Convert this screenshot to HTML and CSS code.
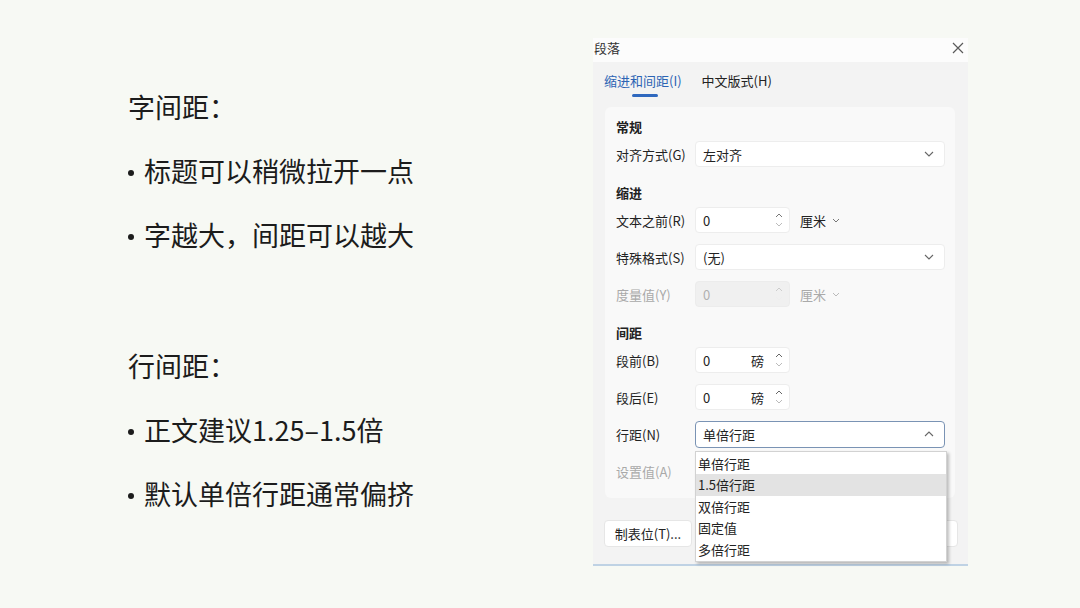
FILE: index.html
```html
<!DOCTYPE html>
<html lang="zh-CN">
<head>
<meta charset="utf-8">
<title>段落</title>
<link rel="stylesheet" href="styles.css">
</head>
<body>
<div class="page">
  <section class="notes">
    <div class="group">
      <p class="line">字间距：</p>
      <p class="line bullet">标题可以稍微拉开一点</p>
      <p class="line bullet">字越大，间距可以越大</p>
    </div>
    <div class="group group2">
      <p class="line">行间距：</p>
      <p class="line bullet">正文建议1.25–1.5倍</p>
      <p class="line bullet">默认单倍行距通常偏挤</p>
    </div>
  </section>

  <section class="dialog">
    <div class="titlebar">
      <span class="title">段落</span>
      <svg class="close" width="12" height="12" viewBox="0 0 12 12"><path d="M1 1 L11 11 M11 1 L1 11" stroke="#5a5a5a" stroke-width="1.2" fill="none"/></svg>
    </div>
    <div class="tabs">
      <span class="tab active">缩进和间距(I)</span>
      <span class="tab">中文版式(H)</span>
    </div>
    <div class="panel">
      <div class="sec-title first">常规</div>
      <div class="row">
        <span class="label">对齐方式(G)</span>
        <div class="select"><span>左对齐</span>
          <svg class="chev" width="10" height="6" viewBox="0 0 10 6"><path d="M1 1 L5 5 L9 1" stroke="#666" stroke-width="1.1" fill="none"/></svg>
        </div>
      </div>

      <div class="sec-title">缩进</div>
      <div class="row">
        <span class="label">文本之前(R)</span>
        <div class="spin"><span class="val">0</span>
          <span class="arrows">
            <svg width="8" height="5" viewBox="0 0 8 5"><path d="M1 4 L4 1 L7 4" stroke="#777" stroke-width="1" fill="none"/></svg>
            <svg width="8" height="5" viewBox="0 0 8 5"><path d="M1 1 L4 4 L7 1" stroke="#bbb" stroke-width="1" fill="none"/></svg>
          </span>
        </div>
        <span class="unit">厘米
          <svg width="8" height="5" viewBox="0 0 8 5"><path d="M1 1 L4 4 L7 1" stroke="#777" stroke-width="1" fill="none"/></svg>
        </span>
      </div>
      <div class="row">
        <span class="label">特殊格式(S)</span>
        <div class="select"><span>(无)</span>
          <svg class="chev" width="10" height="6" viewBox="0 0 10 6"><path d="M1 1 L5 5 L9 1" stroke="#666" stroke-width="1.1" fill="none"/></svg>
        </div>
      </div>
      <div class="row disabled">
        <span class="label">度量值(Y)</span>
        <div class="spin off"><span class="val">0</span>
          <span class="arrows">
            <svg width="8" height="5" viewBox="0 0 8 5"><path d="M1 4 L4 1 L7 4" stroke="#ccc" stroke-width="1" fill="none"/></svg>
            <svg width="8" height="5" viewBox="0 0 8 5"><path d="M1 1 L4 4 L7 1" stroke="#eee" stroke-width="1" fill="none"/></svg>
          </span>
        </div>
        <span class="unit">厘米
          <svg width="8" height="5" viewBox="0 0 8 5"><path d="M1 1 L4 4 L7 1" stroke="#bbb" stroke-width="1" fill="none"/></svg>
        </span>
      </div>

      <div class="sec-title">间距</div>
      <div class="row">
        <span class="label">段前(B)</span>
        <div class="spin"><span class="val">0</span><span class="pt">磅</span>
          <span class="arrows">
            <svg width="8" height="5" viewBox="0 0 8 5"><path d="M1 4 L4 1 L7 4" stroke="#666" stroke-width="1" fill="none"/></svg>
            <svg width="8" height="5" viewBox="0 0 8 5"><path d="M1 1 L4 4 L7 1" stroke="#bbb" stroke-width="1" fill="none"/></svg>
          </span>
        </div>
      </div>
      <div class="row">
        <span class="label">段后(E)</span>
        <div class="spin"><span class="val">0</span><span class="pt">磅</span>
          <span class="arrows">
            <svg width="8" height="5" viewBox="0 0 8 5"><path d="M1 4 L4 1 L7 4" stroke="#666" stroke-width="1" fill="none"/></svg>
            <svg width="8" height="5" viewBox="0 0 8 5"><path d="M1 1 L4 4 L7 1" stroke="#bbb" stroke-width="1" fill="none"/></svg>
          </span>
        </div>
      </div>
      <div class="row">
        <span class="label">行距(N)</span>
        <div class="select open"><span>单倍行距</span>
          <svg class="chev" width="10" height="6" viewBox="0 0 10 6"><path d="M1 5 L5 1 L9 5" stroke="#666" stroke-width="1.1" fill="none"/></svg>
          <ul class="menu">
            <li>单倍行距</li>
            <li class="hl">1.5倍行距</li>
            <li>双倍行距</li>
            <li>固定值</li>
            <li>多倍行距</li>
          </ul>
        </div>
      </div>
      <div class="row disabled">
        <span class="label">设置值(A)</span>
      </div>
    </div>
    <div class="buttons">
      <button class="btn">制表位(T)...</button>
      <button class="btn btn-right"></button>
    </div>
  </section>
</div>
</body>
</html>
```

FILE: styles.css
```css
* { box-sizing: border-box; }
html, body { margin: 0; padding: 0; }
body {
  width: 1080px;
  height: 608px;
  background: #f7f9f4;
  font-family: "Noto Sans CJK SC", "Noto Sans", sans-serif;
  overflow: hidden;
}
.page {
  display: flex;
  align-items: flex-start;
}
.notes {
  width: 593px;
  padding-left: 128px;
  padding-top: 75px;
  color: #1c1c1c;
}
.line {
  margin: 0;
  font-size: 27px;
  line-height: 64px;
  height: 64px;
  white-space: nowrap;
}
.bullet::before {
  content: "";
  display: inline-block;
  width: 6px;
  height: 6px;
  border-radius: 50%;
  background: #1c1c1c;
  margin-right: 10px;
  vertical-align: middle;
  position: relative;
  top: -2px;
}
.group2 { margin-top: 67px; }

.dialog {
  width: 375px;
  margin-top: 38px;
  background: #f3f3f3;
  border-bottom: 2px solid #bfd2e4;
  font-size: 13px;
  color: #222;
}
.titlebar {
  height: 24px;
  background: #fcfcfc;
  display: flex;
  align-items: center;
  justify-content: space-between;
  padding: 0 4px 4px 1px;
}
.title { font-size: 13px; color: #333; line-height: 20px; }
.tabs {
  height: 45px;
  display: flex;
  gap: 20px;
  align-items: flex-start;
  padding: 9px 0 0 11px;
}
.tab { line-height: 20px; color: #222; position: relative; }
.tab.active { color: #2d64b4; }
.tab.active::after {
  content: "";
  position: absolute;
  left: 28px;
  width: 26px;
  top: 23px;
  height: 3px;
  border-radius: 2px;
  background: #2f68be;
}
.panel {
  margin: 0 13px 0 12px;
  background: #f9f9f9;
  border-radius: 6px;
  padding: 10px 10px 14px 11px;
}
.sec-title {
  font-weight: bold;
  line-height: 20px;
  margin: 16px 0 4px;
}
.sec-title.first { margin-top: 0; }
.row {
  display: flex;
  align-items: center;
  height: 26px;
  margin-bottom: 11px;
}
.row:last-child { margin-bottom: 0; }
.label { width: 79px; flex: none; white-space: nowrap; }
.disabled .label { color: #a9a9a9; }
.select {
  position: relative;
  width: 250px;
  height: 26px;
  background: #fff;
  border-radius: 4px;
  border: 1px solid #ededed;
  display: flex;
  align-items: center;
  justify-content: space-between;
  padding: 0 10px 0 7px;
}
.select.open {
  width: 251px;
  height: 27px;
  border: 1px solid #7a93b4;
}
.chev { flex: none; }
.spin {
  width: 95px;
  height: 26px;
  background: #fff;
  border-radius: 4px;
  border: 1px solid #ededed;
  display: flex;
  align-items: center;
  padding: 0 6px 0 7px;
}
.spin .val { flex: 1; }
.spin .pt { margin-right: 11px; }
.spin.off { background: #f0f0f0; border-color: #ececec; color: #b0b0b0; }
.arrows {
  display: flex;
  flex-direction: column;
  gap: 4px;
}
.arrows svg { display: block; }
.unit {
  margin-left: 10px;
  display: flex;
  align-items: center;
  gap: 6px;
}
.disabled .unit { color: #aaa; }
.menu {
  position: absolute;
  left: -1px;
  top: 29px;
  width: 252px;
  margin: 0;
  padding: 1px 0;
  list-style: none;
  background: #fff;
  border: 1px solid #d2d2d2;
  box-shadow: 2px 2px 3px rgba(0,0,0,0.25);
  z-index: 5;
}
.menu li {
  height: 21.5px;
  line-height: 21.5px;
  padding-left: 2px;
  color: #222;
}
.menu li.hl { background: #e3e3e3; }
.buttons {
  display: flex;
  justify-content: space-between;
  padding: 22px 10px 17px 11px;
}
.btn {
  font-family: inherit;
  font-size: 13px;
  color: #222;
  height: 27px;
  width: 88px;
  background: #fff;
  border: 1px solid #e6e6e6;
  border-radius: 4px;
  padding: 0;
}
.btn-right { width: 60px; }
```
